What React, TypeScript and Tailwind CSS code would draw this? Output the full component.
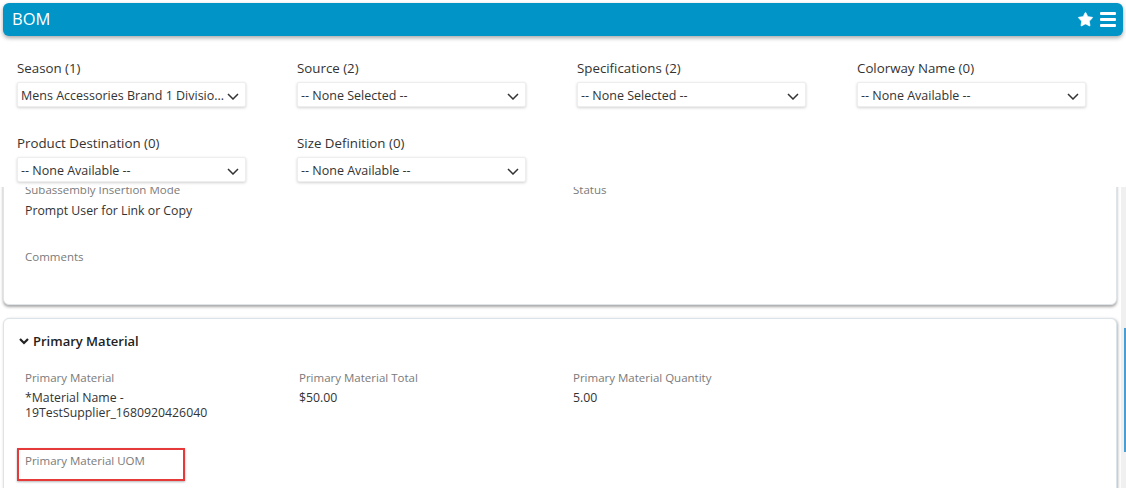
import { Star } from "lucide-react"

const font = { fontFamily: '"Open Sans", "Liberation Sans", sans-serif' }

const filters = [
  { label: "Season (1)", value: "Mens Accessories Brand 1 Divisio..." },
  { label: "Source (2)", value: "-- None Selected --" },
  { label: "Specifications (2)", value: "-- None Selected --" },
  { label: "Colorway Name (0)", value: "-- None Available --" },
  { label: "Product Destination (0)", value: "-- None Available --" },
  { label: "Size Definition (0)", value: "-- None Available --" },
]

function Field({ label, lines }: { label: string; lines?: string[] }) {
  return (
    <div>
      <div className="text-[11.5px] leading-[16px] text-[#7a7a7a]">{label}</div>
      {lines && (
        <div className="mt-[4px] text-[12.3px] leading-[15px] text-[#333]">
          {lines.map((l, i) => (
            <div key={i}>{l}</div>
          ))}
        </div>
      )}
    </div>
  )
}

export default function App() {
  return (
    <div className="w-[1126px] h-[488px] overflow-hidden bg-white flex flex-col" style={font}>
      <div className="mx-[3px] mt-[3px] h-[33px] shrink-0 bg-[#0094c7] rounded-[6px] shadow-[0_2px_4px_rgba(0,0,0,0.35)] flex items-center justify-between pl-[9px] pr-[7px] text-white">
        <span className="text-[16.5px] leading-none">BOM</span>
        <div className="flex items-center gap-[6px]">
          <Star size={17} fill="white" strokeWidth={1} />
          <svg width="16" height="15" viewBox="0 0 16 15">
            <rect x="0" y="0" width="16" height="3" rx="1" fill="white" />
            <rect x="0" y="6" width="16" height="3" rx="1" fill="white" />
            <rect x="0" y="12" width="16" height="3" rx="1" fill="white" />
          </svg>
        </div>
      </div>

      <div className="shrink-0 pl-[17px] pt-[22px] pb-[5px] grid grid-cols-[280px_280px_280px_280px] gap-y-[26px]">
        {filters.map((f) => (
          <div key={f.label}>
            <div className="text-[13.3px] leading-[20px] text-[#333]">{f.label}</div>
            <div className="mt-[4px] w-[229px] h-[25px] bg-white rounded-[2px] border border-[#eceef0] shadow-[0_1px_3px_rgba(0,0,0,0.18)] flex items-center justify-between pl-[3px] pr-[6px] pt-[3px]">
              <span className="text-[12.5px] text-[#333] whitespace-nowrap overflow-hidden">{f.value}</span>
              <svg width="12" height="7" viewBox="0 0 12 7" className="shrink-0">
                <path d="M1 1 L6 6 L11 1" stroke="#333" strokeWidth="1.5" fill="none" />
              </svg>
            </div>
          </div>
        ))}
      </div>

      <div className="flex-1 flex min-h-0">
        <div className="w-[1121px] overflow-hidden">
          <div className="-mt-[41px] ml-[3px] w-[1114px] h-[159px] bg-white border border-[#dfe4e8] rounded-[6px] shadow-[0_2px_3px_rgba(0,0,0,0.35)] pl-[21px] pt-[35px]">
            <div className="grid grid-cols-[548px_274px]">
              <Field label="Subassembly Insertion Mode" />
              <Field label="Status" />
            </div>
            <div className="mt-[5px] text-[12.3px] leading-[16px] text-[#333]">Prompt User for Link or Copy</div>
            <div className="mt-[30px]">
              <Field label="Comments" />
            </div>
          </div>

          <div className="mt-[13px] ml-[3px] w-[1114px] h-[200px] bg-white border border-[#dbe4ea] rounded-[6px] shadow-[1px_1px_3px_rgba(0,0,0,0.3)] pt-[12px]">
            <div className="flex items-center pl-[14px] gap-[3px]">
              <svg width="12" height="10" viewBox="0 0 12 10">
                <path d="M2 3 L6 7 L10 3" stroke="#222" strokeWidth="2.2" fill="none" />
              </svg>
              <span className="text-[13px] leading-[20px] font-semibold text-[#222]">Primary Material</span>
            </div>
            <div className="pl-[21px] mt-[19px] grid grid-cols-[274px_274px_274px]">
              <Field label="Primary Material" lines={["*Material Name -", "19TestSupplier_1680920426040"]} />
              <Field label="Primary Material Total" lines={["$50.00"]} />
              <Field label="Primary Material Quantity" lines={["5.00"]} />
            </div>
            <div className="pl-[21px] mt-[33px]">
              <div className="relative w-fit">
                <Field label="Primary Material UOM" />
                <div className="absolute -left-[8px] -top-[5px] w-[168px] h-[33px] border-2 border-[#e5393a] shadow-[0_1px_2px_rgba(0,0,0,0.3)]" />
              </div>
            </div>
          </div>
        </div>
        <div className="w-[5px] bg-[#f0f0f0] flex justify-end pt-[141px]">
          <div className="w-[2px] h-[124px] bg-[#4a9ed0]" />
        </div>
      </div>
    </div>
  )
}
